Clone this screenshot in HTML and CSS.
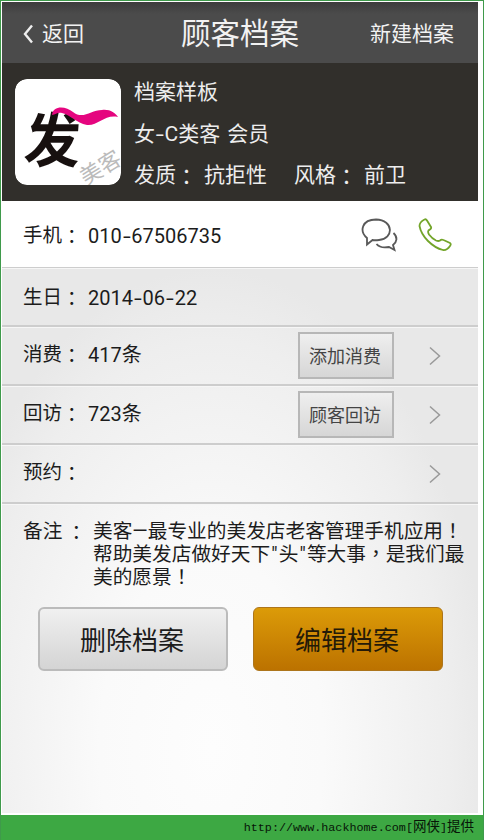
FILE: index.html
```html
<!DOCTYPE html>
<html>
<head>
<meta charset="utf-8">
<title>顾客档案</title>
<link rel="stylesheet" href="styles.css">
</head>
<body>
<div class="frame">
<main class="screen">
  <header class="topbar">
    <a class="back"><svg width="12" height="20" viewBox="0 0 12 20"><path d="M10 1.500 3 10l7 8.500"/></svg><span>返回</span></a>
    <h1>顾客档案</h1>
    <a class="new">新建档案</a>
  </header>
  <section class="profile">
    <svg class="avatar" width="106" height="106" viewBox="0 0 106 106">
      <rect width="106" height="106" rx="12" fill="#fff"/>
      <text class="mark" transform="translate(8 83) skewX(-4) scale(.95 1)">发</text>
      <path d="M37 36C38 26 51 27 58 33C68 41 76 31 87 31C95 30 100 34 103 38C90 35 83 47 72 46C61 44 56 36 47 34C42 33 41 36 37 36Z" fill="#e5057f"/>
      <text class="stamp" transform="translate(71 107) rotate(-32)">美客</text>
    </svg>
    <div class="facts">
      <p>档案样板</p>
      <p>女<s>-</s>C类客<em> </em>会员</p>
      <p><span class="fact">发质<i>：</i>抗拒性</span><span>风格<i>：</i>前卫</span></p>
    </div>
  </section>
  <section class="rows">
    <div class="row phone">
      <span class="label">手机<i>：</i></span><span class="value">010<s>-</s>67506735</span>
      <svg class="chat" width="38" height="34" viewBox="0 0 38 34"><path d="M6 20C-2 13 1 1.500 15 1.500C33 2 33 21 18 22Q14 22.500 11.500 22L6 26.500Z"/><path d="M32.500 15C37 19 36 24 32 27L33.500 32L28 29C23 30 18 29 15.500 26"/></svg>
      <svg class="call" width="34" height="34" viewBox="0 0 34 34"><path d="M6.500 1.500Q8 .8 9 2.500L13 9Q13.500 10 12.500 11L10.500 12.500Q9.500 14 11 16.500Q14 20.500 18 22.500Q20.500 23.500 22 22.500Q23.500 21 25.500 22L32 25Q33.500 26 32 28Q29 32.500 25 32Q17 30 10 23Q3 16 1.500 8Q1.500 4 6.500 1.500Z"/></svg>
    </div>
    <div class="row birth"><span class="label">生日<i>：</i></span><span class="value">2014<s>-</s>06<s>-</s>22</span></div>
    <div class="row"><span class="label">消费<i>：</i></span><span class="value">417条</span><button class="small">添加消费</button><svg class="go" width="12" height="20" viewBox="0 0 12 20"><path d="m1 1.500 9.500 8.500L1 18.500"/></svg></div>
    <div class="row"><span class="label">回访<i>：</i></span><span class="value">723条</span><button class="small">顾客回访</button><svg class="go" width="12" height="20" viewBox="0 0 12 20"><path d="m1 1.500 9.500 8.500L1 18.500"/></svg></div>
    <div class="row"><span class="label">预约<i>：</i></span><span class="value"></span><svg class="go" width="12" height="20" viewBox="0 0 12 20"><path d="m1 1.500 9.500 8.500L1 18.500"/></svg></div>
  </section>
  <section class="note">
    <span class="note-label">备注<i>：</i></span>
    <p>美客—最专业的美发店老客管理手机应用<i>！</i><br>帮助美发店做好天下<b>"</b>头<b>"</b>等大事<i>，</i>是我们最<br>美的愿景<i>！</i></p>
  </section>
  <div class="actions">
    <button class="delete">删除档案</button>
    <button class="edit">编辑档案</button>
  </div>
</main>
<footer><span>http://www.hackhome.com[</span>网侠<span>]</span>提供</footer>
</div>
</body>
</html>
```
FILE: styles.css
```css
* { box-sizing: border-box; }
body { margin: 0; font-family: Roboto, "Noto Sans CJK SC", sans-serif; color: #1c1c1c; }
h1, p { margin: 0; font-weight: 400; }
i { font-style: normal; font-family: "Noto Sans CJK TC", sans-serif; line-height: 0; }
.label i, .note-label i, .profile i { display: inline-block; transform: translateY(2px); }
b { font-weight: 400; }
s { text-decoration: none; display: inline-block; width: 9.6px; text-align: center; transform: scaleX(1.4); }
svg { display: block; fill: none; flex: none; }
button { font-family: inherit; margin: 0; padding: 0; white-space: nowrap; }
.frame { height: 840px; border: 1px solid #3f9a4b; border-bottom: 0; padding: 1px 5px 0 1px; background: #fff; display: flex; flex-direction: column; overflow: hidden; }
.screen { height: 811px; flex: none; background: radial-gradient(ellipse 280px 480px at 44% 92%, #fdfdfd 0%, #fafafa 40%, #eee 85%, #e8e8e8 100%); }
.topbar { height: 61px; display: grid; grid-template-columns: 1fr auto 1fr; align-items: center; padding: 2px 24px 0 20px; background: linear-gradient(#3c3c3c, #4b4b4b 12px, #4b4b4b); color: #f2f2f2; font-size: 21px; line-height: 30px; }
.back { display: flex; align-items: center; gap: 8px; }
.back svg { stroke: #eee; stroke-width: 2.4; }
.topbar h1 { font-size: 29.5px; line-height: 40px; padding-left: 3px; margin-right: -1px; }
.new { justify-self: end; }
.profile { height: 138px; display: flex; padding: 16px 0 0 13px; gap: 13px; background: #312f2b; color: #ededed; font-size: 21px; }
.mark { font: 700 59px "Noto Sans CJK SC", sans-serif; fill: #17100f; }
.stamp { font: 22px "Noto Sans CJK SC", sans-serif; fill: #bbb; }
.avatar { border-radius: 12px; overflow: hidden; }
.facts { margin-top: -8px; }
.facts p { height: 41.5px; line-height: 42px; white-space: pre; }
.facts em { display: inline-block; width: 7px; }
.fact { margin-right: 27px; }
.profile i { width: 28px; }
.row { height: 59px; display: flex; align-items: center; padding: 0 37px 0 21px; border-bottom: 2px solid #cdcdcd; font-size: 19.5px; line-height: 28px; box-shadow: 0 1px #f6f6f6; }
.label { width: 65px; white-space: nowrap; }
.label, .value { padding-bottom: 2px; }
.value { flex: 1; font-size: 20px; }
.phone { height: 67px; background: #fff; padding-right: 26px; border-width: 1px; }
.phone .label, .phone .value { padding: 3px 0 0; }
.birth { height: 59px; }
.birth .label, .birth .value { padding: 2px 0 0; }
.chat { stroke: #595959; stroke-width: 1.8; margin: 2px 19px 0 0; }
.call { stroke: #73a52a; stroke-width: 1.8; margin-top: 2px; }
.go { stroke: #999; stroke-width: 1.5; }
.small { width: 96px; height: 47px; margin-right: 35px; padding: 0 2px 1px 0; border: 2px solid #b7b7b7; background: linear-gradient(#efefef, #d6d6d6); color: #444; font-size: 18px; }
.note { height: 86px; display: flex; padding: 16px 0 0 21px; font-size: 19.7px; line-height: 23px; }
.note-label { width: 70px; flex: none; white-space: nowrap; }
.note-label i { margin-left: 4px; }
.note p { white-space: nowrap; height: 70px; }
.note b { display: inline-block; width: 8.5px; line-height: 20px; text-align: center; }
.actions { display: flex; gap: 25px; padding: 17px 0 0 36px; }
.actions button { width: 190px; height: 64px; padding: 0 2px 2px 0; border-radius: 6px; font-size: 26px; color: #1c1c1c; }
.delete { border: 2px solid #bbb; background: linear-gradient(#f0f0f0, #d4d4d4); }
.edit { border: 1px solid #ad751b; background: linear-gradient(#dc9b08, #bc7200); color: #241a08 !important; }
footer { height: 26px; flex: none; margin: 2px -5px 0 -1px; padding-right: 9px; background: #3da843; color: #071507; text-align: right; font: 13.5px/20px "Noto Sans CJK SC", sans-serif; white-space: nowrap; }
footer span { font-family: "Liberation Mono", monospace; font-size: 11.75px; }
```
